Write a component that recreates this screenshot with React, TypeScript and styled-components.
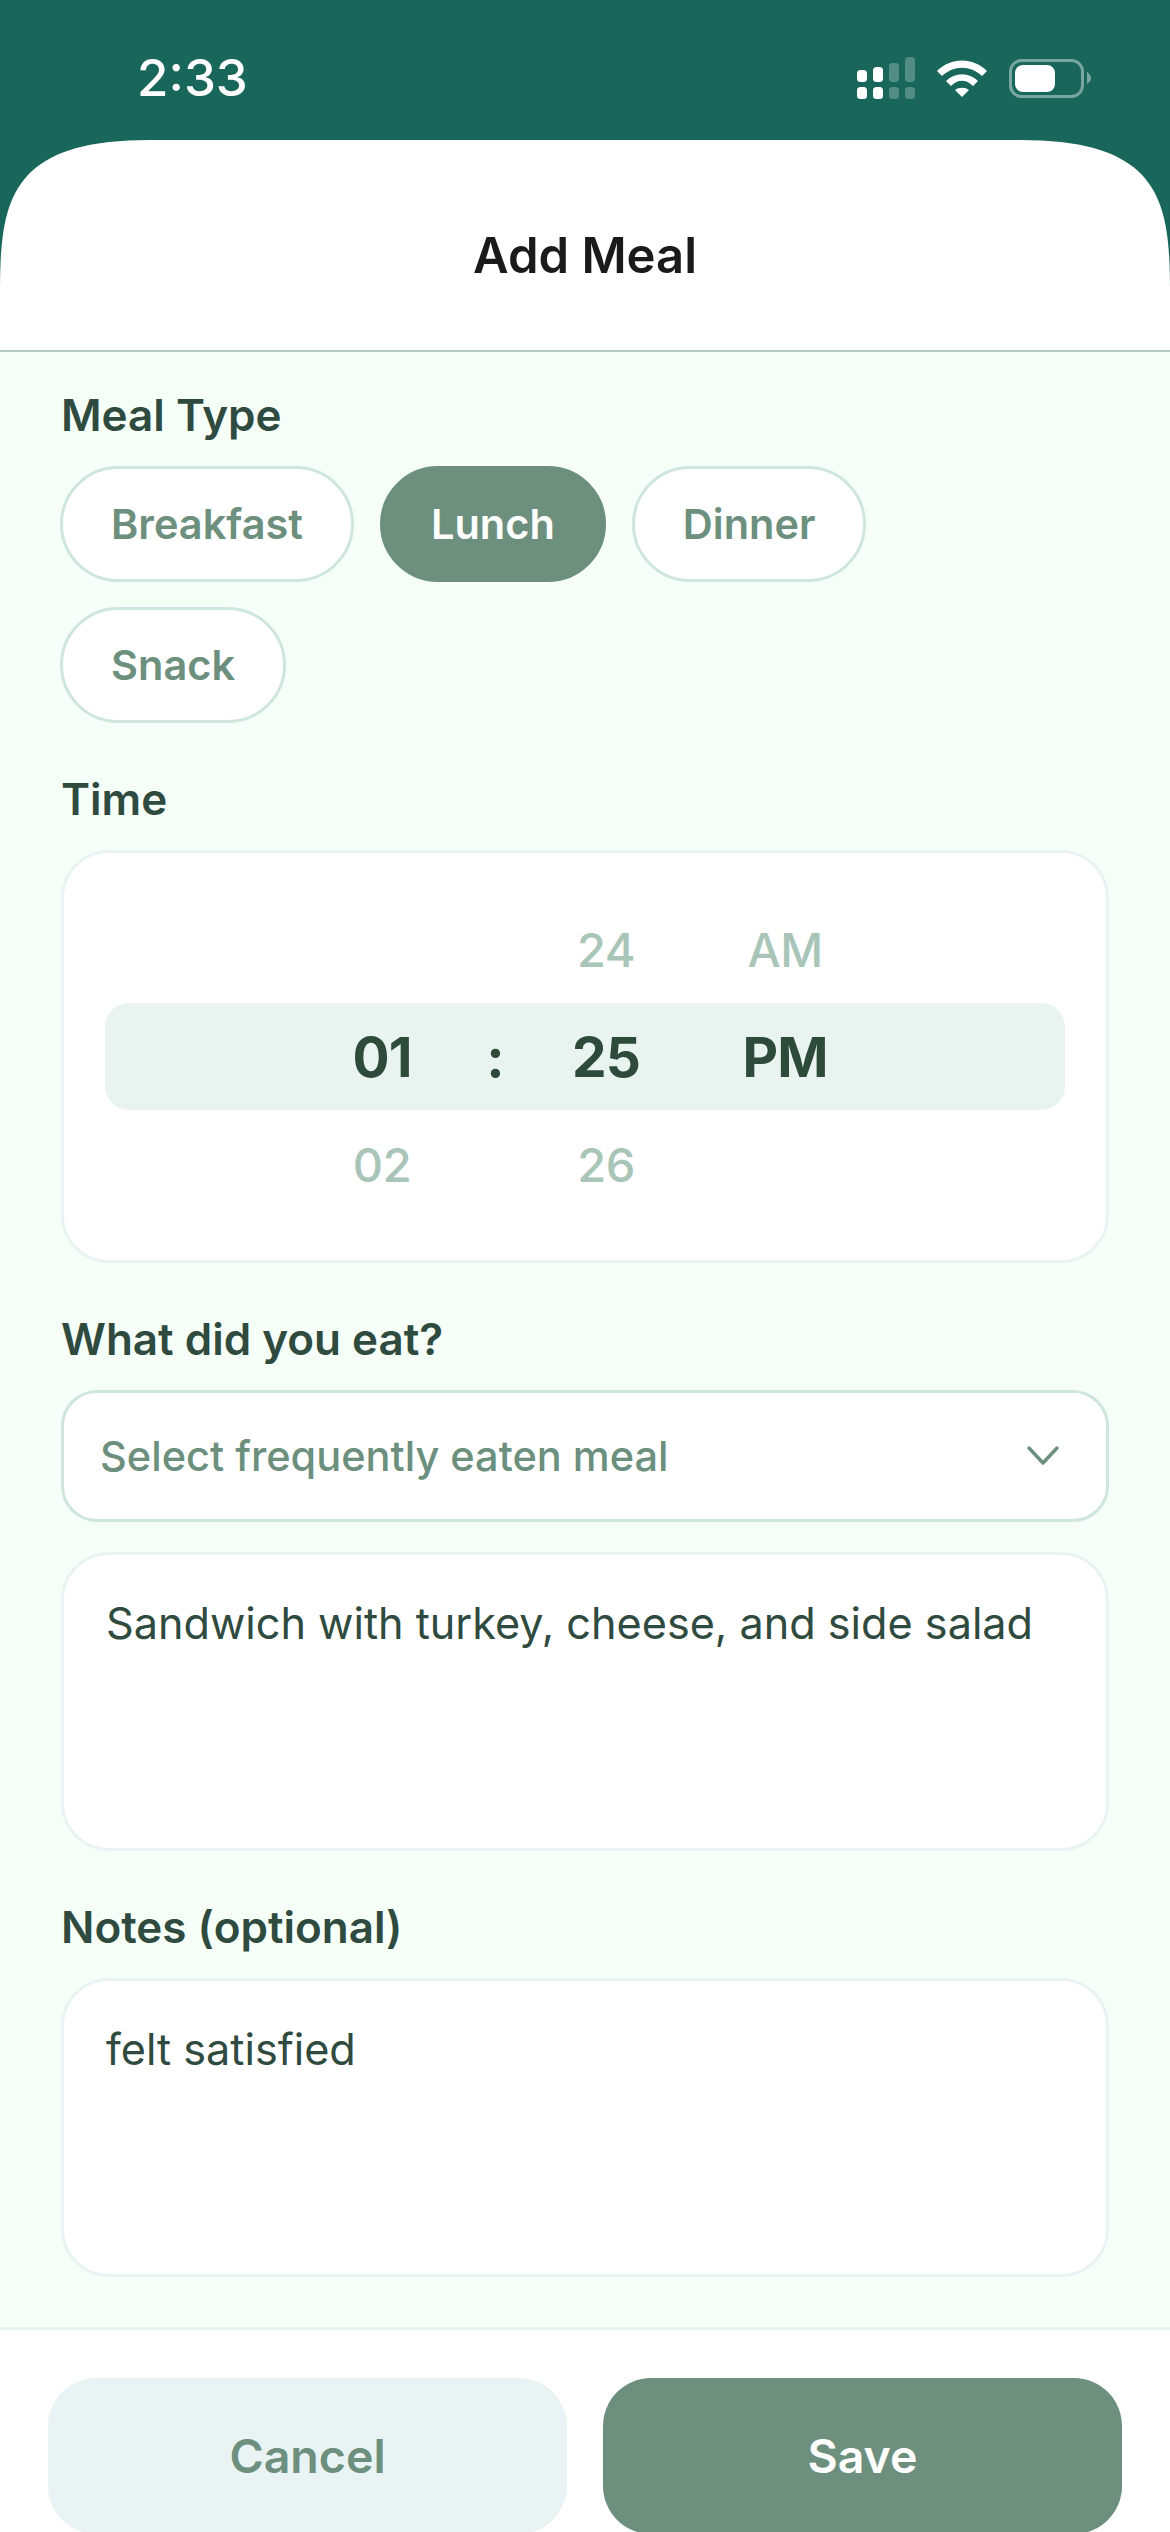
import styled, { createGlobalStyle } from "styled-components";

const GlobalStyle = createGlobalStyle`
  html, body {
    margin: 0;
    padding: 0;
    background: #f5fff8;
  }
  * {
    box-sizing: border-box;
  }
`;

const MEAL_TYPES = ["Breakfast", "Lunch", "Dinner", "Snack"];

const Screen = styled.div`
  width: 1170px;
  height: 2532px;
  display: flex;
  flex-direction: column;
  overflow: hidden;
  background: #19665a;
  font-family: Inter, "Liberation Sans", sans-serif;
`;

const StatusBar = styled.div`
  height: 140px;
  flex-shrink: 0;
  display: flex;
  align-items: flex-start;
  justify-content: space-between;
  padding: 50px 79px 0 137px;
  color: #fff;
`;

const Clock = styled.span`
  font-size: 51px;
  line-height: 56px;
  font-weight: 500;
`;

const StatusIcons = styled.div`
  display: flex;
  align-items: center;
  gap: 22px;
  padding-top: 7px;
`;

const Header = styled.div`
  height: 212px;
  flex-shrink: 0;
  display: flex;
  align-items: center;
  justify-content: center;
  padding-top: 20px;
  background: #fff;
  border-bottom: 2px solid #b4cbbf;
  clip-path: path("M0 152 C0 60 10 0 150 0 L1020 0 C1160 0 1170 60 1170 152 L1170 212 L0 212 Z");
`;

const Title = styled.h1`
  margin: 0;
  font-size: 49px;
  font-weight: 600;
  color: #1a1a1a;
`;

const Body = styled.div`
  flex: 1;
  display: flex;
  flex-direction: column;
  padding: 36px 61px 0;
  background: #f5fff8;
`;

const Label = styled.div`
  font-size: 44px;
  line-height: 54px;
  font-weight: 600;
  color: #2f4a3e;
  margin-bottom: 24px;
`;

const Chips = styled.div`
  display: flex;
  flex-wrap: wrap;
  gap: 25px 26px;
  margin: 0 0 49px -1px;
`;

const Chip = styled.div<{ $active?: boolean }>`
  height: 116px;
  display: flex;
  align-items: center;
  padding: 0 48px;
  border-radius: 58px;
  border: 3px solid ${(p) => (p.$active ? "#6c8f7e" : "#cfe5df")};
  background: ${(p) => (p.$active ? "#6c8f7e" : "#fff")};
  color: ${(p) => (p.$active ? "#fff" : "#6c8f7e")};
  font-size: 41.5px;
  font-weight: 600;
`;

const PickerCard = styled.div`
  height: 413px;
  display: flex;
  flex-direction: column;
  justify-content: center;
  padding: 0 41px;
  margin-bottom: 49px;
  background: #fff;
  border: 3px solid #e9f3f3;
  border-radius: 48px;
`;

const PickerRow = styled.div<{ $selected?: boolean }>`
  height: ${(p) => (p.$selected ? 107 : 108)}px;
  flex-shrink: 0;
  display: grid;
  grid-template-columns: 337px 106px 116px 242px;
  justify-content: start;
  align-items: center;
  text-align: center;
  border-radius: 24px;
  background: ${(p) => (p.$selected ? "#e9f4f0" : "transparent")};
  color: ${(p) => (p.$selected ? "#2d4a3b" : "#a8c5b8")};
  font-size: ${(p) => (p.$selected ? 55 : 47)}px;
  letter-spacing: ${(p) => (p.$selected ? -1 : -0.5)}px;
  font-weight: ${(p) => (p.$selected ? 700 : 500)};
`;

const Hour = styled.span`
  justify-self: end;
  width: 120px;
`;

const Select = styled.div`
  height: 132px;
  display: flex;
  align-items: center;
  justify-content: space-between;
  padding: 0 46px 0 36px;
  margin-bottom: 30px;
  background: #fff;
  border: 3px solid #cfe5df;
  border-radius: 36px;
  color: #6c8f7e;
  font-size: 41.5px;
  font-weight: 500;
`;

const TextBox = styled.div<{ $gap?: number }>`
  height: 299px;
  flex-shrink: 0;
  padding: 38px 42px 0;
  margin-bottom: ${(p) => p.$gap ?? 0}px;
  background: #fff;
  border: 3px solid #e9f3f3;
  border-radius: 48px;
  color: #2f4a3e;
  font-size: 43.2px;
  line-height: 60px;
`;

const Footer = styled.div`
  height: 205px;
  flex-shrink: 0;
  display: grid;
  grid-template-columns: 519px 519px;
  gap: 36px;
  padding: 48px 48px 0;
  background: #fff;
  border-top: 3px solid #e9f3f3;
`;

const Action = styled.div<{ $primary?: boolean }>`
  height: 156px;
  display: flex;
  align-items: center;
  justify-content: center;
  border-radius: 48px;
  background: ${(p) => (p.$primary ? "#6c8f7e" : "#e9f3f3")};
  color: ${(p) => (p.$primary ? "#fff" : "#6c8f7e")};
  font-size: 46.5px;
  font-weight: 600;
`;

const SignalIcon = () => (
  <svg width="58" height="42" viewBox="0 0 58 42">
    <g fill="#fff">
      <rect x="0" y="13" width="10" height="12" rx="3.5" />
      <rect x="16" y="10" width="10" height="15" rx="3.5" />
      <rect x="0" y="30" width="10" height="12" rx="3.5" />
      <rect x="16" y="30" width="10" height="12" rx="3.5" />
    </g>
    <g fill="#fff" opacity="0.25">
      <rect x="32" y="6" width="10" height="19" rx="3.5" />
      <rect x="48" y="0" width="10" height="25" rx="3.5" />
      <rect x="32" y="30" width="10" height="12" rx="3.5" />
      <rect x="48" y="30" width="10" height="12" rx="3.5" />
    </g>
  </svg>
);

const WifiIcon = () => (
  <svg width="50" height="37" viewBox="0 0 50 37" fill="#fff">
    <path d="M0 11 C14 -3 36 -3 50 11 L45 16 C33 5 17 5 5 16 Z" />
    <path d="M9 21 C18 12 32 12 41 21 L36 26 C29 19 21 19 14 26 Z" />
    <path d="M18 30 C22 27 28 27 32 30 L25 37 Z" />
  </svg>
);

const BatteryIcon = () => (
  <svg width="82" height="39" viewBox="0 0 82 39">
    <rect x="1.5" y="1.5" width="72" height="36" rx="11" fill="none" stroke="#fff" strokeOpacity="0.42" strokeWidth="3" />
    <rect x="6" y="6" width="40" height="27" rx="8" fill="#fff" />
    <path d="M78 13 C81 15 82 17 82 19 C82 21 81 23 78 25 Z" fill="#fff" opacity="0.42" />
  </svg>
);

const ChevronIcon = () => (
  <svg width="34" height="22" viewBox="0 0 34 22" fill="none" stroke="#6c8f7e" strokeWidth="3.5" strokeLinecap="round" strokeLinejoin="round">
    <path d="M3 3 L17 18 L31 3" />
  </svg>
);

export default function App() {
  return (
    <>
      <GlobalStyle />
      <Screen>
        <StatusBar>
          <Clock>2:33</Clock>
          <StatusIcons>
            <SignalIcon />
            <WifiIcon />
            <BatteryIcon />
          </StatusIcons>
        </StatusBar>
        <Header>
          <Title>Add Meal</Title>
        </Header>
        <Body>
          <Label>Meal Type</Label>
          <Chips>
            {MEAL_TYPES.map((type) => (
              <Chip key={type} $active={type === "Lunch"}>
                {type}
              </Chip>
            ))}
          </Chips>
          <Label>Time</Label>
          <PickerCard>
            <PickerRow>
              <Hour />
              <span />
              <span>24</span>
              <span>AM</span>
            </PickerRow>
            <PickerRow $selected>
              <Hour>01</Hour>
              <span>:</span>
              <span>25</span>
              <span>PM</span>
            </PickerRow>
            <PickerRow>
              <Hour>02</Hour>
              <span />
              <span>26</span>
              <span />
            </PickerRow>
          </PickerCard>
          <Label>What did you eat?</Label>
          <Select>
            Select frequently eaten meal
            <ChevronIcon />
          </Select>
          <TextBox $gap={49}>Sandwich with turkey, cheese, and side salad</TextBox>
          <Label>Notes (optional)</Label>
          <TextBox>felt satisfied</TextBox>
        </Body>
        <Footer>
          <Action>Cancel</Action>
          <Action $primary>Save</Action>
        </Footer>
      </Screen>
    </>
  );
}
